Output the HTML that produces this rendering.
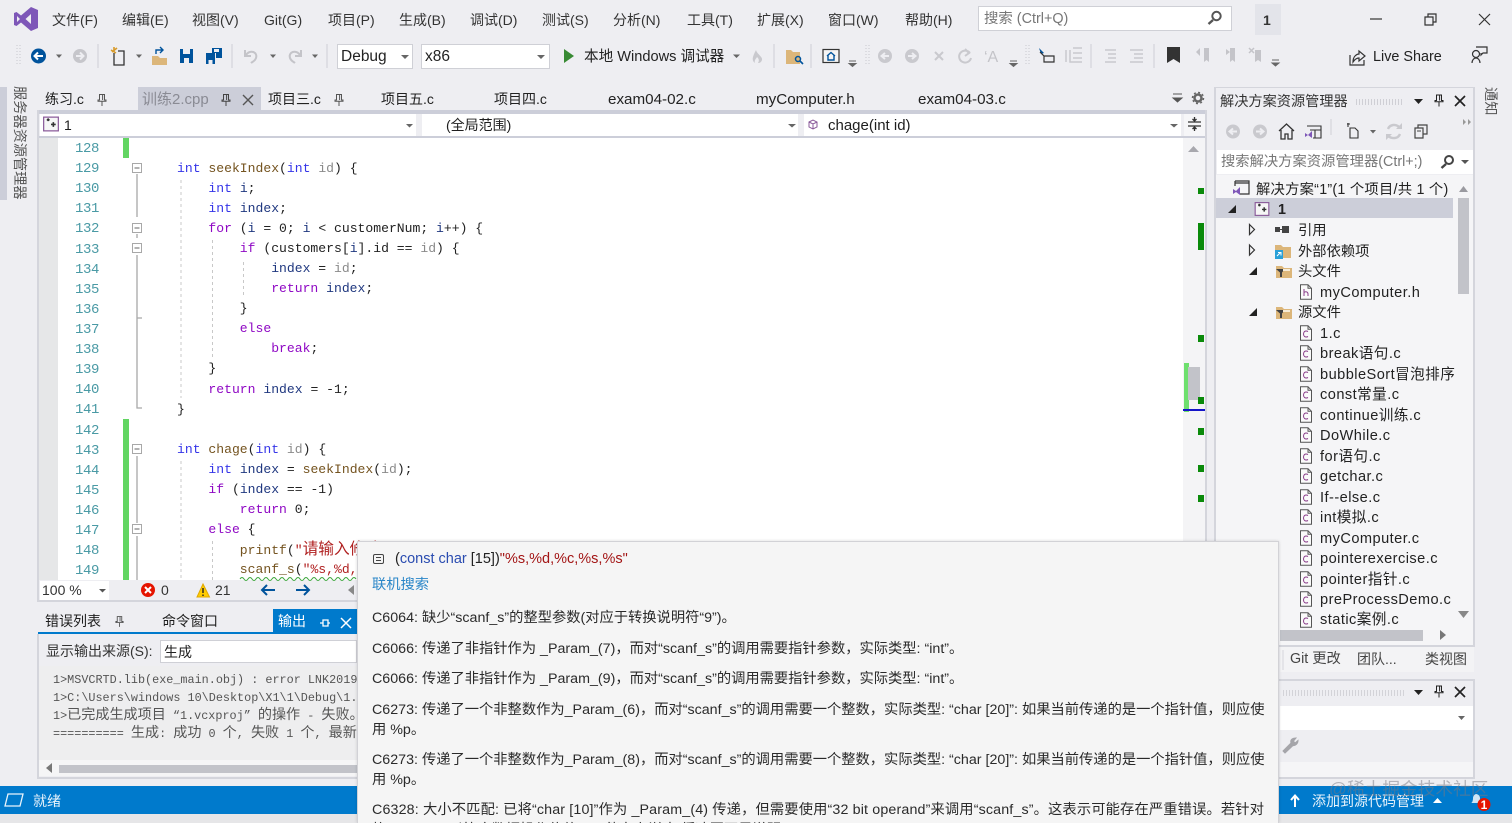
<!DOCTYPE html>
<html lang="zh-CN"><head><meta charset="utf-8"><title>Visual Studio</title>
<style>
html,body{margin:0;padding:0}
body{width:1512px;height:823px;overflow:hidden;position:relative;background:#eeeef2;color:#1e1e1e;font:14px/20px "Liberation Sans","Noto Sans CJK SC",sans-serif}
.b{position:absolute}
.t{position:absolute;white-space:pre;line-height:20px}
.menu .t{top:10px;font-size:14px;color:#333}
.tab .t{top:89px;font-size:14px;color:#222}
.tab .l{font-size:15.2px;top:90px}
.box{position:absolute;background:#fff;box-sizing:border-box}
.code{position:absolute;left:0;top:1px}
.code .t{left:177px;font:13.08px/20px "Liberation Mono","Noto Sans CJK SC",monospace;color:#222}
.code .n{left:75px;margin-top:1px;font:14px/20px "Liberation Mono",monospace;color:#4a9aa5;letter-spacing:-.4px}
.k{color:#3535e8}.p{color:#8f08c4}.g{color:#8a8a8a}.f{color:#74531f}.v{color:#1f377f}.s{color:#b02020}
.cj{font-family:"Noto Sans CJK SC",sans-serif;font-size:15.7px}
.out .t{left:53px;font:11.8px/18px "Liberation Mono","Noto Sans CJK SC",monospace;color:#555}
.out .cj{font-size:14.1px}
.tree{position:absolute;left:0;top:1px}
.tree .t{font-size:14.3px;color:#222}
.tree .l{font-size:14.6px;letter-spacing:.45px}
#tip{position:absolute;left:357px;top:541px;width:922px;height:282px;background:#f5f5f5;border:1px solid #d2d2d6;border-bottom:0;box-sizing:border-box;box-shadow:0 0 3px rgba(0,0,0,.15);overflow:hidden;z-index:5}
#tip .t{left:14px;font-size:14.27px;color:#2a2a2a;margin-top:1px}
svg{position:absolute;left:0;top:0}
</style></head><body>

<!-- panels / backgrounds -->
<div class="b" style="left:0;top:87px;width:7px;height:113px;background:#ccced9"></div>
<div class="b" style="left:38px;top:137px;width:20px;height:443px;background:#e6e7e8"></div>
<div class="b" style="left:58px;top:137px;width:1125px;height:443px;background:#fff"></div>
<div class="b" style="left:38px;top:110px;width:1168px;height:4px;background:#ccced9"></div>
<div class="b" style="left:38px;top:136px;width:1168px;height:2px;background:#ccced9"></div>
<div class="b" style="left:37px;top:110px;width:2px;height:491px;background:#d4d5dc"></div>
<div class="b" style="left:1205px;top:110px;width:2px;height:491px;background:#d4d5dc"></div>
<div class="b" style="left:1183px;top:138px;width:22px;height:442px;background:#f4f4f6"></div>
<div class="b" style="left:138px;top:87px;width:123px;height:23px;background:#ccced9"></div>
<div class="box" style="left:40px;top:114px;width:376px;height:22px"></div>
<div class="box" style="left:422px;top:114px;width:376px;height:22px"></div>
<div class="box" style="left:804px;top:114px;width:377px;height:22px"></div>
<div class="box" style="left:1184px;top:114px;width:21px;height:22px;background:#f6f6f8"></div>
<div class="box" style="left:978px;top:6px;width:254px;height:25px;border:1px solid #cfd0d6"></div>
<div class="b" style="left:1255px;top:4px;width:26px;height:31px;background:#e3e4ea"></div>
<div class="box" style="left:337px;top:44px;width:76px;height:25px;border:1px solid #cfd0d6"></div>
<div class="box" style="left:421px;top:44px;width:129px;height:25px;border:1px solid #cfd0d6"></div>
<div class="box" style="left:40px;top:581px;width:69px;height:19px"></div>
<div class="b" style="left:37px;top:600px;width:320px;height:2px;background:#d4d5dc"></div>
<!-- output panel -->
<div class="b" style="left:273px;top:609px;width:84px;height:23px;background:#007acc"></div>
<div class="b" style="left:38px;top:632px;width:319px;height:2px;background:#007acc"></div>
<div class="box" style="left:160px;top:640px;width:197px;height:23px;border:1px solid #cfd0d6"></div>
<div class="b" style="left:38px;top:666px;width:319px;height:94px;background:#eeeeef"></div>
<div class="b" style="left:38px;top:760px;width:319px;height:16px;background:#f5f5f6"></div>
<div class="b" style="left:59px;top:765px;width:298px;height:8px;background:#c2c3c9"></div>
<div class="b" style="left:37px;top:634px;width:2px;height:144px;background:#d4d5dc"></div>
<div class="b" style="left:37px;top:777px;width:320px;height:2px;background:#d4d5dc"></div>
<!-- status bar -->
<div class="b" style="left:0;top:786px;width:1512px;height:28px;background:#007acc"></div>
<div class="b" style="left:0;top:814px;width:1512px;height:9px;background:#e6e6e8"></div>
<!-- solution explorer -->
<div class="b" style="left:1214px;top:87px;width:261px;height:560px;box-sizing:border-box;border:2px solid #d4d5dc;border-top-width:1px;background:#eeeef2"></div>
<div class="b" style="left:1216px;top:175px;width:257px;height:470px;background:#f5f5f7"></div>
<div class="box" style="left:1217px;top:150px;width:256px;height:24px"></div>
<div class="b" style="left:1216px;top:198px;width:237px;height:20px;background:#ccced9"></div>
<div class="b" style="left:1458px;top:198px;width:11px;height:96px;background:#c2c3c9"></div>
<div class="b" style="left:1280px;top:630px;width:143px;height:11px;background:#c2c3c9"></div>
<div class="b" style="left:1280px;top:647px;width:194px;height:25px;background:#f3f3f5"></div>
<!-- lower right panel -->
<div class="b" style="left:1279px;top:679px;width:196px;height:100px;box-sizing:border-box;border:2px solid #d4d5dc;border-left:0;background:#eeeef2"></div>
<div class="b" style="left:1280px;top:706px;width:193px;height:24px;background:#fff"></div>
<div class="b" style="left:1280px;top:762px;width:193px;height:15px;background:#f5f5f7"></div>
<div class="b" style="left:1283px;top:690px;width:121px;height:6px;background:repeating-linear-gradient(90deg,#d3d3d8 0 1px,#eeeef2 1px 3px)"></div>
<div class="b" style="left:1356px;top:99px;width:47px;height:6px;background:repeating-linear-gradient(90deg,#cfcfd5 0 1px,#eeeef2 1px 3px)"></div>

<!-- menu -->
<div class="menu">
<span class="t" style="left:52px">文件(F)</span><span class="t" style="left:122px">编辑(E)</span><span class="t" style="left:192px">视图(V)</span><span class="t" style="left:264px">Git(G)</span><span class="t" style="left:328px">项目(P)</span><span class="t" style="left:399px">生成(B)</span><span class="t" style="left:470px">调试(D)</span><span class="t" style="left:542px">测试(S)</span><span class="t" style="left:613px">分析(N)</span><span class="t" style="left:687px">工具(T)</span><span class="t" style="left:757px">扩展(X)</span><span class="t" style="left:828px">窗口(W)</span><span class="t" style="left:905px">帮助(H)</span>
</div>
<span class="t" style="left:984px;top:9px;font-size:14.4px;color:#777">搜索 (Ctrl+Q)</span>
<span class="t" style="left:1263px;top:10px;font-weight:bold;color:#333">1</span>
<span class="t" style="left:341px;top:47px;font-size:15.5px;color:#222">Debug</span>
<span class="t" style="left:425px;top:47px;font-size:15.5px;color:#222">x86</span>
<span class="t" style="left:584px;top:47px;font-size:14.6px;color:#222">本地 Windows 调试器</span>
<span class="t" style="left:1373px;top:47px;font-size:14.4px;color:#222">Live Share</span>

<!-- tabs -->
<div class="tab">
<span class="t" style="left:45px">练习.c</span><span class="t" style="left:142px;top:90px;color:#8a8b94;font-size:15px">训练2.cpp</span><span class="t" style="left:268px">项目三.c</span><span class="t" style="left:381px">项目五.c</span><span class="t" style="left:494px">项目四.c</span><span class="t l" style="left:608px">exam04-02.c</span><span class="t l" style="left:756px">myComputer.h</span><span class="t l" style="left:918px">exam04-03.c</span>
</div>
<span class="t" style="left:64px;top:115px">1</span>
<span class="t" style="left:446px;top:115px">(全局范围)</span>
<span class="t" style="left:828px;top:116px;font-size:15px">chage(int id)</span>

<!-- vertical labels -->
<span class="t" style="left:10px;top:86px;writing-mode:vertical-rl;text-orientation:sideways;font-size:14.2px;color:#555;line-height:18px">服务器资源管理器</span>
<span class="t" style="left:1481px;top:87px;writing-mode:vertical-rl;text-orientation:sideways;font-size:14.2px;color:#555;line-height:18px">通知</span>

<!-- code -->
<div class="code">
<span class="t n" style="top:137px">128</span><span class="t n" style="top:157px">129</span><span class="t n" style="top:177px">130</span><span class="t n" style="top:197px">131</span><span class="t n" style="top:217px">132</span><span class="t n" style="top:237.500px">133</span><span class="t n" style="top:258px">134</span><span class="t n" style="top:278px">135</span><span class="t n" style="top:298px">136</span><span class="t n" style="top:318px">137</span><span class="t n" style="top:338px">138</span><span class="t n" style="top:358px">139</span><span class="t n" style="top:378px">140</span><span class="t n" style="top:398px">141</span><span class="t n" style="top:419px">142</span><span class="t n" style="top:439px">143</span><span class="t n" style="top:459px">144</span><span class="t n" style="top:479px">145</span><span class="t n" style="top:499px">146</span><span class="t n" style="top:519px">147</span><span class="t n" style="top:539px">148</span><span class="t n" style="top:559px">149</span>
<span class="t" style="top:158px"><span class="k">int</span> <span class="f">seekIndex</span>(<span class="k">int</span> <span class="g">id</span>) {</span>
<span class="t" style="top:178px">    <span class="k">int</span> <span class="v">i</span>;</span>
<span class="t" style="top:198px">    <span class="k">int</span> <span class="v">index</span>;</span>
<span class="t" style="top:218px">    <span class="p">for</span> (<span class="v">i</span> = 0; <span class="v">i</span> &lt; customerNum; <span class="v">i</span>++) {</span>
<span class="t" style="top:238px">        <span class="p">if</span> (customers[<span class="v">i</span>].id == <span class="g">id</span>) {</span>
<span class="t" style="top:258px">            <span class="v">index</span> = <span class="g">id</span>;</span>
<span class="t" style="top:278px">            <span class="p">return</span> <span class="v">index</span>;</span>
<span class="t" style="top:298px">        }</span>
<span class="t" style="top:318px">        <span class="p">else</span></span>
<span class="t" style="top:338px">            <span class="p">break</span>;</span>
<span class="t" style="top:358px">    }</span>
<span class="t" style="top:379px">    <span class="p">return</span> <span class="v">index</span> = -1;</span>
<span class="t" style="top:399px">}</span>
<span class="t" style="top:439px"><span class="k">int</span> <span class="f">chage</span>(<span class="k">int</span> <span class="g">id</span>) {</span>
<span class="t" style="top:459px">    <span class="k">int</span> <span class="v">index</span> = <span class="f">seekIndex</span>(<span class="g">id</span>);</span>
<span class="t" style="top:479px">    <span class="p">if</span> (<span class="v">index</span> == -1)</span>
<span class="t" style="top:499px">        <span class="p">return</span> 0;</span>
<span class="t" style="top:519px">    <span class="p">else</span> {</span>
<span class="t" style="top:537px">        <span class="f">printf</span>(<span class="s">"<span class="cj">请输入修改</span></span></span>
<span class="t" style="top:559px">        <span class="f">scanf_s</span>(<span class="s">"%s,%d,</span></span>
</div>

<!-- bottom editor bar -->
<span class="t" style="left:42px;top:580px;font-size:14px;color:#333">100 %</span>
<span class="t" style="left:161px;top:580px;font-size:14px;color:#333">0</span>
<span class="t" style="left:215px;top:580px;font-size:14px;color:#333">21</span>

<!-- output panel text -->
<span class="t" style="left:45px;top:611px;font-size:14px">错误列表</span>
<span class="t" style="left:162px;top:611px;font-size:14px">命令窗口</span>
<span class="t" style="left:278px;top:611px;font-size:14px;color:#fff">输出</span>
<span class="t" style="left:46px;top:641px;font-size:14px;color:#333">显示输出来源(S):</span>
<span class="t" style="left:164px;top:642px;font-size:14px;color:#222">生成</span>
<div class="out">
<span class="t" style="top:671px">1&gt;MSVCRTD.lib(exe_main.obj) : error LNK2019</span>
<span class="t" style="top:689px">1&gt;C:\Users\windows 10\Desktop\X1\1\Debug\1.</span>
<span class="t" style="top:705px">1&gt;<span class="cj">已完成生成项目</span> “1.vcxproj” <span class="cj">的操作</span> - <span class="cj">失败。</span></span>
<span class="t" style="top:723px">========== <span class="cj">生成</span>: <span class="cj">成功</span> 0 <span class="cj">个</span>, <span class="cj">失败</span> 1 <span class="cj">个</span>, <span class="cj">最新</span></span>
</div>

<!-- status -->
<span class="t" style="left:33px;top:791px;font-size:14px;color:#e8f3fb">就绪</span>
<span class="t" style="left:1312px;top:791px;font-size:14px;color:#e8f3fb">添加到源代码管理</span>
<span class="t" style="left:1329px;top:779px;font-size:17.700px;color:rgba(120,120,130,.5)">@稀土掘金技术社区</span>

<!-- solution explorer text -->
<span class="t" style="left:1220px;top:92px;font-size:14.2px;color:#333">解决方案资源管理器</span>
<span class="t" style="left:1221px;top:152px;font-size:14.3px;color:#777">搜索解决方案资源管理器(Ctrl+;)</span>
<div class="tree">
<span class="t" style="left:1256px;top:178.500px;letter-spacing:.25px">解决方案“1”(1 个项目/共 1 个)</span>
<span class="t" style="left:1278px;top:199px;font-weight:bold">1</span>
<span class="t" style="left:1298px;top:220px">引用</span>
<span class="t" style="left:1298px;top:241px">外部依赖项</span>
<span class="t" style="left:1298px;top:261px">头文件</span>
<span class="t l" style="left:1320px;top:282px">myComputer.h</span>
<span class="t" style="left:1298px;top:302px">源文件</span>
<span class="t l" style="left:1320px;top:323px">1.c</span>
<span class="t l" style="left:1320px;top:343px">break语句.c</span>
<span class="t l" style="left:1320px;top:364px">bubbleSort冒泡排序</span>
<span class="t l" style="left:1320px;top:384px">const常量.c</span>
<span class="t l" style="left:1320px;top:405px">continue训练.c</span>
<span class="t l" style="left:1320px;top:425px">DoWhile.c</span>
<span class="t l" style="left:1320px;top:446px">for语句.c</span>
<span class="t l" style="left:1320px;top:466px">getchar.c</span>
<span class="t l" style="left:1320px;top:487px">If--else.c</span>
<span class="t l" style="left:1320px;top:507px">int模拟.c</span>
<span class="t l" style="left:1320px;top:528px">myComputer.c</span>
<span class="t l" style="left:1320px;top:548px">pointerexercise.c</span>
<span class="t l" style="left:1320px;top:569px">pointer指针.c</span>
<span class="t l" style="left:1320px;top:589px">preProcessDemo.c</span>
<span class="t l" style="left:1320px;top:609px">static案例.c</span>
</div>
<span class="t" style="left:1290px;top:649px;font-size:14.3px;color:#444">Git 更改</span>
<span class="t" style="left:1357px;top:649px;font-size:14px;color:#444">团队...</span>
<span class="t" style="left:1425px;top:649px;font-size:14px;color:#444">类视图</span>

<!-- all icons -->
<svg width="1512" height="823" viewBox="0 0 1512 823" fill="none">
<defs>
<symbol id="file" viewBox="0 0 14 16" overflow="visible"><path d="M1.500 .8H9L12.500 4.300V15.200H1.500Z" fill="#fafafa" stroke="#555"/><path d="M9 .8V4.300H12.500" stroke="#555"/></symbol>
<symbol id="fold" viewBox="0 0 18 16" overflow="visible"><path d="M1 2H7L9 4H17V14H1Z" fill="#dcb67a"/><path d="M1 5H10L7 8.500V13H5V8.500Z" fill="#424242"/><path d="M8 6H15" stroke="#f7ecd6" stroke-width="2"/></symbol>
<symbol id="proj" viewBox="0 0 17 16" overflow="visible"><rect x=".7" y=".7" width="15.600" height="14.600" fill="#f6f6f6" stroke="#8a5a9a" stroke-width="1.300"/><path d="M4 3.500H7M5.500 2V5M8.500 8.500H13.500M11 6V11" stroke="#333" stroke-width="1.700"/></symbol>
<symbol id="pin" viewBox="0 0 10 12" overflow="visible"><path d="M2.500 .5H7.500V6H9V7.200H1V6H2.500ZM5 7.200V12" stroke="currentColor" fill="none"/><path d="M5.600 1V6" stroke="currentColor"/></symbol>
</defs>

<!-- VS logo -->
<path fill="#7e57b8" fill-rule="evenodd" d="M31 7 38 10V28L31 31 21 22.500 16.500 26 14 25V13L16.500 12 21 15.500ZM31 14 25.500 19 31 24ZM17 16V22L20 19Z"/>

<!-- toolbar grip -->
<path d="M17 45V66M20 45V66" stroke="#c8c8ce" stroke-dasharray="1 2"/>
<circle cx="38.500" cy="56" r="7.500" fill="#00539c"/><path d="M43 56H35M38 52.500 34.500 56 38 59.500" stroke="#fff" stroke-width="2"/>
<path d="M56 54.500H62L59 58ZM136 54.500H142L139 58ZM270 54.500H276L273 58ZM312 54.500H318L315 58ZM401 55H409L405 59ZM537 55H545L541 59ZM733 54.500H740L736.500 58Z" fill="#666"/>
<circle cx="80" cy="56" r="7" fill="#c6c6cb"/><path d="M76 56H83M80 52.500 83.500 56 80 59.500" stroke="#eeeef2" stroke-width="2"/>
<path d="M98 44V68M232 44V68M327 44V68M774 44V68M811 44V68M1091 44V68M1154 44V68" stroke="#cfcfd5"/>
<!-- new project -->
<path d="M114 53V65H124V51H118" stroke="#333" stroke-width="1.300"/><path d="M116 53 111 50M114 47V52M112 52 117 48" stroke="#d79a2b" stroke-width="1.600"/>
<!-- open -->
<path d="M152 56H158L160 58H167V65H152Z" fill="#dcb67a"/><path d="M156 54V50H162M160 47 163 50 160 53" stroke="#00539c" stroke-width="1.400"/>
<!-- save -->
<path d="M180 49H193V63H180Z" fill="#00539c"/><rect x="183" y="49" width="7" height="5" fill="#eeeef2"/><rect x="184" y="58" width="5" height="5" fill="#eeeef2"/>
<path d="M206 53H215V64H206Z" fill="#00539c"/><path d="M212 48H222V58H216V53H212Z" fill="#00539c"/><rect x="214" y="49" width="5" height="3" fill="#eeeef2"/><rect x="208.500" y="60" width="4" height="4" fill="#eeeef2"/>
<!-- undo redo -->
<path d="M245 50V56H251M246 55C250 49 258 52 256 58 255 61 252 62 251 63" stroke="#c4c4c9" stroke-width="2"/>
<path d="M301 50V56H295M300 55C296 49 288 52 290 58 291 61 294 62 295 63" stroke="#c4c4c9" stroke-width="2"/>
<!-- play -->
<path d="M564 49 574 56 564 63Z" fill="#388a34"/>
<!-- flame -->
<path d="M755 63C751 60 753 56 756 50 757 54 763 57 762 60 761 63 759 63 758 63 760 60 758 58 757 57 756 59 754 60 755 63Z" fill="#c9c9ce"/>
<!-- folder search -->
<path d="M786 50H791L793 52H800V64H786Z" fill="#dcb67a"/><circle cx="798" cy="59" r="2.500" stroke="#00539c" stroke-width="1.500"/><path d="M800 61 803 64" stroke="#00539c" stroke-width="1.600"/>
<!-- home -->
<rect x="823" y="49.500" width="16" height="13" stroke="#333" stroke-width="1.200" fill="#f5f5f5"/><path d="M827 56 831 52.500 835 56M828 55.500V60H834V55.500" stroke="#00539c" stroke-width="1.400"/>
<path d="M849 61H856M849 63.500H856L852.500 66.500Z" stroke="#666" fill="#666"/>
<path d="M866 45V66M869 45V66M1026 45V66M1029 45V66" stroke="#c8c8ce" stroke-dasharray="1 2"/>
<circle cx="885" cy="56" r="7" fill="#c9c9ce"/><path d="M889 56H882M885 53 881.500 56 885 59" stroke="#eeeef2" stroke-width="2"/>
<circle cx="912" cy="56" r="7" fill="#c9c9ce"/><path d="M908 56H915M912 53 915.500 56 912 59" stroke="#eeeef2" stroke-width="2"/>
<path d="M935 52 943 60M943 52 935 60" stroke="#c9c9ce" stroke-width="2"/>
<path d="M970 53A6 6 0 1 0 971 58M965 49 969 53 965 56" stroke="#c9c9ce" stroke-width="2"/>
<text x="984" y="62" font-family="Liberation Sans" font-size="16" fill="#c4c4c9">&#8216;A</text>
<path d="M1010 61H1017M1010 63.500H1017L1013.500 66.500Z" stroke="#666" fill="#666"/>
<!-- right toolbar -->
<path d="M1039 48 1044 53 1041 54Z" fill="#00539c"/><path d="M1040 52 1044 56H1054V62H1044V56" stroke="#333" stroke-width="1.200"/>
<path d="M1066 50V62M1070 50V62H1082M1073 48H1082M1073 53H1082M1073 58H1082" stroke="#c9c9ce" stroke-width="1.500"/>
<path d="M1105 50H1116M1108 54H1116M1108 58H1116M1105 62H1116M1130 50H1143M1134 54H1143M1134 58H1143M1130 62H1143" stroke="#c9c9ce" stroke-width="1.500"/>
<path d="M1167 47H1180V63L1173.500 59 1167 63Z" fill="#333"/>
<path d="M1196 52 1200 48V56ZM1200 52H1206M1204 48H1209V62L1206.500 60 1204 62Z" fill="#c4c4c9"/>
<path d="M1222 52H1228M1226 49 1230 52 1226 55ZM1230 48H1235V62L1232.500 60 1230 62Z" fill="#c4c4c9"/>
<path d="M1249 48 1254 53M1254 48 1249 53" stroke="#c4c4c9" stroke-width="1.500"/><path d="M1255 50H1261V62L1258 60 1255 62Z" fill="#c4c4c9"/>
<path d="M1272 60H1279M1272 63H1279L1275.500 66Z" stroke="#666" fill="#666"/>
<!-- live share -->
<path d="M1350 55V65H1364V60" stroke="#333" stroke-width="1.200"/><path d="M1353 62C1353 56 1357 54 1359 54V51L1365 56 1359 61V58C1357 58 1355 59 1353 62Z" stroke="#333" stroke-width="1.200" fill="#eeeef2"/>
<circle cx="1476" cy="54" r="3.500" stroke="#333" stroke-width="1.200"/><path d="M1472 63C1472 60 1474 58 1476 58 1478 58 1480 60 1480 63M1476 47H1487V53H1483L1481 55V53" stroke="#333" stroke-width="1.200"/>
<!-- search mag -->
<circle cx="1216.500" cy="16" r="4.200" stroke="#555" stroke-width="2"/><path d="M1213 20 1208.500 24" stroke="#555" stroke-width="2.400"/>
<!-- window buttons -->
<path d="M1370 19H1382" stroke="#333" stroke-width="1.200"/>
<path d="M1425 17H1433V25H1425ZM1428 17V14H1436V22H1433" stroke="#333" stroke-width="1.200"/>
<path d="M1479 14 1490 25M1490 14 1479 25" stroke="#333" stroke-width="1.200"/>

<!-- tab icons -->
<use href="#pin" x="97" y="94" width="10" height="12" color="#555"/>
<use href="#pin" x="221" y="94" width="10" height="12" color="#444"/>
<path d="M243 95 253 105M253 95 243 105" stroke="#555" stroke-width="1.400"/>
<use href="#pin" x="334" y="94" width="10" height="12" color="#555"/>
<path d="M1173 94H1182M1173 98H1182L1177.500 102Z" stroke="#555" fill="#555"/>
<circle cx="1198" cy="98" r="3.500" stroke="#666" stroke-width="2.500"/><circle cx="1198" cy="98" r="5.500" stroke="#666" stroke-dasharray="2 2.300" stroke-width="1.500"/>

<!-- nav bar icons -->
<use href="#proj" x="43" y="116" width="16" height="16"/>
<path d="M406 124H413L409.500 127.500ZM788 124H796L792 127.500ZM1170 124H1178L1174 127.500Z" fill="#666"/>
<path d="M809 122 813 120 817 122V127L813 129 809 127ZM809 122 813 124 817 122M813 124V129" stroke="#8a5a9a"/>
<path d="M1188 122H1201M1188 126H1201M1194.500 117V120M1192.500 119 1194.500 121 1196.500 119M1194.500 131V128M1192.500 129 1194.500 127 1196.500 129" stroke="#333" stroke-width="1.300"/>

<!-- editor gutter -->
<rect x="123" y="138" width="6" height="20" fill="#62d562"/>
<rect x="123" y="419" width="6" height="161" fill="#62d562"/>
<g stroke="#a8a8a8" stroke-width="1.300"><path d="M137 174V217M137 234V238M137 255V318H142M137 318V408H142M137 456V523M137 536V580"/></g>
<g fill="#fff" stroke="#a8a8a8">
<rect x="132.500" y="163.500" width="9" height="9"/><rect x="132.500" y="223.500" width="9" height="9"/><rect x="132.500" y="243.500" width="9" height="9"/><rect x="132.500" y="444.500" width="9" height="9"/><rect x="132.500" y="524.500" width="9" height="9"/>
</g>
<path d="M134.500 168H139.500M134.500 228H139.500M134.500 248H139.500M134.500 449H139.500M134.500 529H139.500" stroke="#666"/>
<!-- indent guides -->
<g stroke="#c8c8c8" stroke-dasharray="3 3"><path d="M181 180V398M212.500 240V358M243.500 262V298M181 461V580M212.500 541V580"/></g>
<!-- squiggle -->
<path d="M240 579q2-3 4 0t4 0 4 0 4 0 4 0 4 0 4 0 4 0 4 0 4 0 4 0 4 0 4 0 4 0 4 0 4 0 4 0 4 0 4 0 4 0 4 0 4 0 4 0 4 0 4 0 4 0 4 0 4 0 4 0" stroke="#3ca63c"/>

<!-- overview scroll -->
<path d="M1188 152H1199L1193.500 146Z" fill="#a8a8ae"/>
<rect x="1184" y="363" width="5" height="49" fill="#6fe06f"/>
<rect x="1188" y="367" width="12" height="33" fill="#c2c3c9"/>
<g fill="#0a8a0a"><rect x="1198" y="188" width="6" height="6"/><rect x="1198" y="223" width="6" height="27"/><rect x="1198" y="335" width="6" height="7"/><rect x="1198" y="397" width="6" height="7"/><rect x="1198" y="428" width="6" height="7"/><rect x="1198" y="465" width="6" height="7"/><rect x="1198" y="495" width="6" height="7"/></g>
<rect x="1183" y="409" width="22" height="2" fill="#1414c8"/>

<!-- editor bottom -->
<path d="M99 589H106L102.500 592.500Z" fill="#555"/>
<circle cx="148" cy="590" r="7" fill="#e51400"/><path d="M145 587 151 593M151 587 145 593" stroke="#fff" stroke-width="2"/>
<path d="M203 584 209.500 597H197Z" fill="#ffcc00" stroke="#e0a800"/><path d="M203 588V593M203 594.500V596" stroke="#222" stroke-width="1.400"/>
<path d="M275 590H262M267 585 262 590 267 595M296 590H309M304 585 309 590 304 595" stroke="#00539c" stroke-width="2"/>
<path d="M354 585V595L348 590Z" fill="#888"/>

<!-- output -->
<use href="#pin" x="115" y="616" width="9" height="11" color="#555"/>
<path d="M320 623H323V620H328V626H323V623M328 623H330" stroke="#fff" stroke-width="1.300"/>
<path d="M341 618 351 628M351 618 341 628" stroke="#fff" stroke-width="1.500"/>
<path d="M52 763V773L46 768Z" fill="#777"/>

<!-- status icons -->
<path d="M8 794H23L20 806H5Z" stroke="#e8f3fb" stroke-width="1.300"/>
<path d="M1295 807V796M1291 800 1295 795.500 1299 800" stroke="#fff" stroke-width="2"/>
<path d="M1433 803H1442L1437.500 798Z" fill="#fff"/>
<path d="M1471 803C1472 803 1473 801 1473 798 1473 796 1475 794 1476 794 1478 794 1480 796 1480 798V803Z" fill="#cfe6f5"/>
<circle cx="1484" cy="804.500" r="6.500" fill="#e51400"/><text x="1484" y="809" font-family="Liberation Sans" font-size="12" font-weight="bold" fill="#fff" text-anchor="middle">1</text>

<!-- solution explorer header -->
<path d="M1414 99H1423L1418.500 104Z" fill="#222"/>
<use href="#pin" x="1434" y="94" width="10" height="13" color="#222"/>
<path d="M1455 96 1465 106M1465 96 1455 106" stroke="#222" stroke-width="1.700"/>
<!-- SE toolbar -->
<circle cx="1233" cy="131.500" r="7" fill="#c9c9ce"/><path d="M1237 131.500H1230M1233 128.500 1229.500 131.500 1233 134.500" stroke="#eeeef2" stroke-width="2"/>
<circle cx="1260" cy="131.500" r="7" fill="#c9c9ce"/><path d="M1256 131.500H1263M1260 128.500 1263.500 131.500 1260 134.500" stroke="#eeeef2" stroke-width="2"/>
<path d="M1279 131 1286.500 124 1294 131M1281 130V139H1285V134H1288V139H1292V130" stroke="#333" stroke-width="1.300"/>
<path d="M1307 126H1321V138H1313M1310 130H1321M1315 130V138" stroke="#333" stroke-width="1.100"/><path d="M1305 133 1308 135 1312 131V138L1308 135 1305 137Z" fill="#7e57b8"/>
<path d="M1331 119V135" stroke="#d0d0d5"/>
<path d="M1347 124 1350 124M1348 123V127M1350 128H1355L1358 131V138H1350Z" stroke="#333" stroke-width="1.100"/>
<path d="M1370 130H1376L1373 133.500Z" fill="#666"/>
<path d="M1388 129C1390 124 1396 124 1399 127M1400 134C1398 139 1392 139 1388 136" stroke="#c9c9ce" stroke-width="2.400"/><path d="M1396 129H1402V123ZM1392 134H1386V140Z" fill="#c9c9ce"/>
<path d="M1415 128H1423V138H1415ZM1418 128V125H1427V134H1423" stroke="#444" stroke-width="1.200"/><path d="M1417 131H1421" stroke="#444"/>
<path d="M1463 119V125L1466 122ZM1468 119V125L1471 122Z" fill="#999"/>
<!-- SE search -->
<circle cx="1449" cy="160" r="4" stroke="#444" stroke-width="2"/><path d="M1446 164 1441.500 168" stroke="#444" stroke-width="2.400"/>
<path d="M1461 160H1469L1465 164Z" fill="#555"/>
<!-- SE tree icons -->
<path d="M1235 181H1249V194H1240M1235 181V186M1235 183H1249" stroke="#333" stroke-width="1.200"/><path d="M1233 189 1236 191 1240 187V195L1236 192 1233 194Z" fill="#7e57b8"/>
<path d="M1459 192H1468L1463.500 186Z" fill="#9a9aa0"/>
<path d="M1228 213H1236V205Z" fill="#222"/>
<use href="#proj" x="1254" y="202" width="16" height="14"/>
<path d="M1249.500 224.500 1254.500 229.500 1249.500 234.500ZM1249.500 245 1254.500 250 1249.500 255Z" stroke="#333" stroke-width="1.200" fill="#f5f5f7"/>
<path d="M1249 275H1257V267ZM1249 316H1257V308Z" fill="#222"/>
<rect x="1275" y="227" width="5" height="5" fill="#444"/><rect x="1282" y="226" width="7" height="7" fill="#444"/><path d="M1280 229.500H1282" stroke="#444"/>
<path d="M1275 245H1281L1283 247H1291V258H1275Z" fill="#dcb67a"/><rect x="1275" y="250" width="8" height="9" fill="#29a0d8"/><path d="M1277 256 1280.500 252.500M1278 252.500H1281V255.500" stroke="#fff"/>
<use href="#fold" x="1275" y="264" width="18" height="16"/>
<use href="#fold" x="1275" y="305" width="18" height="16"/>
<g>
<use href="#file" x="1299" y="284" width="14" height="16"/><path d="M1304 289V296M1304 292.500C1306 291 1308 292 1308 294V296" stroke="#8a3d8a"/>
<use href="#file" x="1299" y="325" width="14" height="16"/>
<use href="#file" x="1299" y="345" width="14" height="16"/>
<use href="#file" x="1299" y="366" width="14" height="16"/>
<use href="#file" x="1299" y="386" width="14" height="16"/>
<use href="#file" x="1299" y="407" width="14" height="16"/>
<use href="#file" x="1299" y="427" width="14" height="16"/>
<use href="#file" x="1299" y="448" width="14" height="16"/>
<use href="#file" x="1299" y="468" width="14" height="16"/>
<use href="#file" x="1299" y="489" width="14" height="16"/>
<use href="#file" x="1299" y="509" width="14" height="16"/>
<use href="#file" x="1299" y="530" width="14" height="16"/>
<use href="#file" x="1299" y="550" width="14" height="16"/>
<use href="#file" x="1299" y="571" width="14" height="16"/>
<use href="#file" x="1299" y="591" width="14" height="16"/>
<use href="#file" x="1299" y="612" width="14" height="16"/>
</g>
<path stroke="#8a3d8a" d="M1308 331.500C1305 330 1303.500 332 1303.500 334S1305 338 1308 336.500M1308 351.500C1305 350 1303.500 352 1303.500 354S1305 358 1308 356.500M1308 372.500C1305 371 1303.500 373 1303.500 375S1305 379 1308 377.500M1308 392.500C1305 391 1303.500 393 1303.500 395S1305 399 1308 397.500M1308 413.500C1305 412 1303.500 414 1303.500 416S1305 420 1308 418.500M1308 433.500C1305 432 1303.500 434 1303.500 436S1305 440 1308 438.500M1308 454.500C1305 453 1303.500 455 1303.500 457S1305 461 1308 459.500M1308 474.500C1305 473 1303.500 475 1303.500 477S1305 481 1308 479.500M1308 495.500C1305 494 1303.500 496 1303.500 498S1305 502 1308 500.500M1308 515.500C1305 514 1303.500 516 1303.500 518S1305 522 1308 520.500M1308 536.500C1305 535 1303.500 537 1303.500 539S1305 543 1308 541.500M1308 556.500C1305 555 1303.500 557 1303.500 559S1305 563 1308 561.500M1308 577.500C1305 576 1303.500 578 1303.500 580S1305 584 1308 582.500M1308 597.500C1305 596 1303.500 598 1303.500 600S1305 604 1308 602.500M1308 618.500C1305 617 1303.500 619 1303.500 621S1305 625 1308 623.500"/>
<path d="M1458 611H1469L1463.500 618Z" fill="#888"/>
<path d="M1440 630V640L1446 635Z" fill="#777"/>
<path d="M1283 650V670" stroke="#d4d5dc"/>
<!-- lower panel -->
<path d="M1414 690H1423L1418.500 695Z" fill="#222"/>
<use href="#pin" x="1434" y="685" width="10" height="13" color="#222"/>
<path d="M1455 687 1465 697M1465 687 1455 697" stroke="#222" stroke-width="1.700"/>
<path d="M1458 716H1465L1461.500 720Z" fill="#666"/>
<path d="M1283 751 1291 743C1290 740 1292 738 1296 738L1293.500 741 1295 743 1298 740.500C1298 744 1295 746 1293 745.500L1285 753Z" fill="#a5a5aa" stroke="#a5a5aa"/>
</svg>

<!-- tooltip -->
<div id="tip">
<svg width="922" height="40" viewBox="0 0 922 40" fill="none" style="left:0;top:0"><rect x="15.500" y="12.500" width="10" height="9" rx="1.500" stroke="#444"/><path d="M18 15.500H23M18 18.500H23" stroke="#444"/></svg>
<span class="t" style="left:37px;top:6px;font-size:14.500px"><span style="color:#222">(</span><span style="color:#2a4cb0">const char</span><span style="color:#222"> [15])</span><span style="color:#a31515">"%s,%d,%c,%s,%s"</span></span>
<span class="t" style="top:32px;color:#2a86c8">联机搜索</span>
<span class="t" style="top:65px">C6064: 缺少“scanf_s”的整型参数(对应于转换说明符“9”)。</span>
<span class="t" style="top:96px">C6066: 传递了非指针作为 _Param_(7)，而对“scanf_s”的调用需要指针参数，实际类型: “int”。</span>
<span class="t" style="top:126px">C6066: 传递了非指针作为 _Param_(9)，而对“scanf_s”的调用需要指针参数，实际类型: “int”。</span>
<span class="t" style="top:157px">C6273: 传递了一个非整数作为_Param_(6)，而对“scanf_s”的调用需要一个整数，实际类型: “char [20]”: 如果当前传递的是一个指针值，则应使</span>
<span class="t" style="top:177px">用 %p。</span>
<span class="t" style="top:207px">C6273: 传递了一个非整数作为_Param_(8)，而对“scanf_s”的调用需要一个整数，实际类型: “char [20]”: 如果当前传递的是一个指针值，则应使</span>
<span class="t" style="top:227px">用 %p。</span>
<span class="t" style="top:257px;letter-spacing:.14px">C6328: 大小不匹配: 已将“char [10]”作为 _Param_(4) 传递，但需要使用“32 bit operand”来调用“scanf_s”。这表示可能存在严重错误。若针对</span>
<span class="t" style="top:277px">格 scanf_s()以符合数据操作传值，可能存在溢出/缓冲区不足说明</span>
</div>
</body></html>
